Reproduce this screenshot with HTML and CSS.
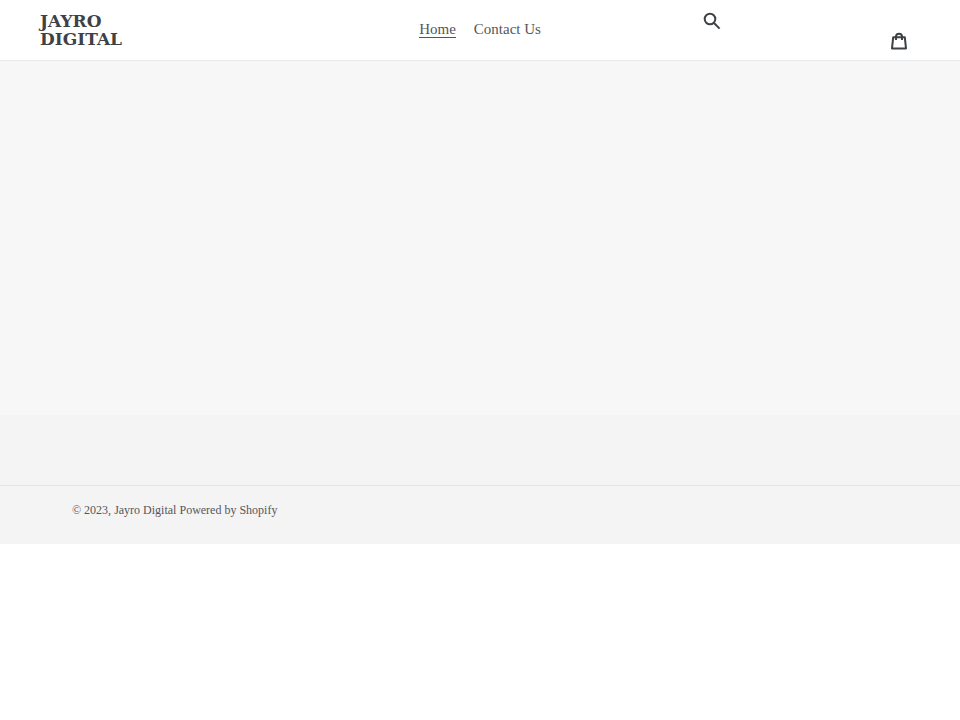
FILE: index.html
```
<!DOCTYPE html>
<html lang="en">
<head>
    <meta charset="UTF-8">
    <meta name="viewport" content="width=device-width, initial-scale=1.0">
    <title>Jayro Digital</title>
    <link rel="stylesheet" href="styles.css">
</head>
<body>
    <header class="site-header">
        <a class="logo" href="/">Jayro Digital</a>

        <nav class="site-nav">
            <a class="active" href="/">Home</a>
            <a href="/pages/contact">Contact Us</a>
        </nav>

        <div class="header-icons">
            <button class="icon-button" type="button" aria-label="Search">
                <svg class="icon" viewBox="0 0 18 18">
                    <circle cx="7" cy="7" r="5.3" />
                    <path d="M11 11l5.6 5.6" />
                </svg>
            </button>
            <a class="icon-button cart" href="/cart" aria-label="Cart">
                <svg class="icon" viewBox="0 0 18 18">
                    <path d="M3.2 5.2h11.6l1.2 11.2H2z" stroke-linejoin="round" />
                    <path d="M6 8V4.6C6 .8 12 .8 12 4.6V8" />
                </svg>
            </a>
        </div>
    </header>

    <main class="main-content"></main>

    <footer class="site-footer">
        <div class="footer-bottom">
            <small>&copy; 2023, <a href="/">Jayro Digital</a> <a href="https://www.shopify.com">Powered by Shopify</a></small>
        </div>
    </footer>
</body>
</html>
```

FILE: styles.css
```
* {
    box-sizing: border-box;
}

body {
    margin: 0;
    font-family: "Liberation Serif", serif;
    color: #55565a;
    background-color: #fff;
}

a {
    color: inherit;
    text-decoration: none;
}

/* Header */
.site-header {
    display: grid;
    grid-template-columns: 1fr 2fr 1fr;
    align-items: start;
    padding: 12px 40px 10px;
    border-bottom: 1px solid #e8e9eb;
}

.logo {
    width: min-content;
    font-family: "DejaVu Serif", serif;
    font-size: 17px;
    font-weight: bold;
    line-height: 18px;
    text-transform: uppercase;
    color: #3d4246;
}

.site-nav {
    display: flex;
    justify-content: center;
    gap: 18px;
    padding-top: 9px;
    font-size: 15px;
    line-height: 16px;
}

.site-nav a {
    border-bottom: 1px solid transparent;
}

.site-nav .active {
    border-bottom-color: #55565a;
}

.header-icons {
    display: flex;
    justify-content: space-between;
    padding: 0 12px 0 3px;
}

.icon-button {
    padding: 0;
    border: 0;
    background: none;
    line-height: 0;
    align-self: flex-start;
}

.cart {
    padding-top: 20px;
}

.icon {
    width: 18px;
    height: 18px;
    fill: none;
    stroke: #3d4246;
    stroke-width: 2;
}

/* Page */
.main-content {
    min-height: 354px;
    background-color: #f7f7f7;
}

/* Footer */
.site-footer {
    padding-top: 70px;
    background-color: #f4f4f4;
}

.footer-bottom {
    padding: 16px 72px 26px;
    border-top: 1px solid #e4e4e6;
    font-size: 12px;
    line-height: 16px;
}

.footer-bottom small {
    font-size: 12px;
}
```
